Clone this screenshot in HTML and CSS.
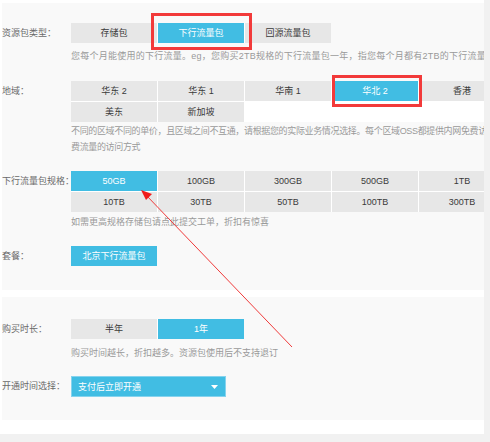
FILE: index.html
```html
<!DOCTYPE html>
<html lang="zh-CN">
<head>
<meta charset="utf-8">
<link rel="stylesheet" href="styles.css">
</head>
<body>
<div class="page">
  <section class="panel panel-top">
    <div class="row row-type">
      <div class="label">资源包类型：</div>
      <div class="content">
        <div class="opts opts-3">
          <div class="opt">存储包</div>
          <div class="opt on">下行流量包</div>
          <div class="opt">回源流量包</div>
        </div>
        <p class="desc desc-type">您每个月能使用的下行流量。eg，您购买2TB规格的下行流量包一年，指您每个月都有2TB的下行流量包可以使用</p>
      </div>
    </div>
    <div class="row row-region">
      <div class="label">地域：</div>
      <div class="content">
        <div class="opts opts-5">
          <div class="opt">华东 2</div>
          <div class="opt">华东 1</div>
          <div class="opt">华南 1</div>
          <div class="opt on">华北 2</div>
          <div class="opt">香港</div>
          <div class="opt">美东</div>
          <div class="opt">新加坡</div>
        </div>
        <p class="desc desc-region">不同的区域不同的单价，且区域之间不互通，请根据您的实际业务情况选择。每个区域OSS都提供内网免费访问，免<br>费流量的访问方式</p>
      </div>
    </div>
    <div class="row row-spec">
      <div class="label">下行流量包规格：</div>
      <div class="content">
        <div class="opts opts-5">
          <div class="opt on">50GB</div>
          <div class="opt">100GB</div>
          <div class="opt">300GB</div>
          <div class="opt">500GB</div>
          <div class="opt">1TB</div>
          <div class="opt">10TB</div>
          <div class="opt">30TB</div>
          <div class="opt">50TB</div>
          <div class="opt">100TB</div>
          <div class="opt">300TB</div>
        </div>
        <p class="desc desc-spec">如需更高规格存储包请点此提交工单，折扣有惊喜</p>
      </div>
    </div>
    <div class="row row-pkg">
      <div class="label">套餐：</div>
      <div class="content">
        <div class="opts opts-1">
          <div class="opt on">北京下行流量包</div>
        </div>
      </div>
    </div>
  </section>
  <section class="panel panel-bottom">
    <div class="row row-dur">
      <div class="label">购买时长：</div>
      <div class="content">
        <div class="opts opts-2">
          <div class="opt">半年</div>
          <div class="opt on">1年</div>
        </div>
        <p class="desc desc-dur">购买时间越长，折扣越多。资源包使用后不支持退订</p>
      </div>
    </div>
    <div class="row row-open">
      <div class="label">开通时间选择：</div>
      <div class="content">
        <div class="select">
          <span>支付后立即开通</span>
          <svg class="caret" width="7" height="4" viewBox="0 0 7 4"><polygon points="0,0 7,0 3.5,4" fill="#fff"/></svg>
        </div>
      </div>
    </div>
  </section>
  <div class="mark mark-type"></div>
  <div class="mark mark-region"></div>
  <svg class="arrow" width="490" height="442" viewBox="0 0 490 442">
    <line x1="292" y1="347" x2="146" y2="195" stroke="#f03a3a" stroke-width="1"/>
    <polygon points="141,190 152,194 146,200" fill="#f01c1c"/>
  </svg>
</div>
</body>
</html>
```

FILE: styles.css
```css
* { box-sizing: border-box; }
html, body { margin: 0; padding: 0; }
body {
  background: #f1f1f1;
  font-family: "Liberation Sans", "Noto Sans CJK SC", sans-serif;
  font-size: 9px;
  width: 490px;
  height: 442px;
  overflow: hidden;
}
.page {
  position: relative;
  width: 484px;
  height: 434px;
  background: #fff;
  padding-top: 3px;
  padding-left: 2px;
  overflow: hidden;
}
.panel {
  background: #f9f9f9;
  width: 482px;
  overflow: hidden;
}
.panel-top {
  height: 287px;
  padding-top: 20px;
}
.panel-bottom {
  margin-top: 7px;
  height: 123px;
  padding-top: 22px;
}
.row {
  display: flex;
}
.label {
  width: 69px;
  flex: none;
  line-height: 20px;
  color: #6a6a6a;
  white-space: nowrap;
}
.content {
  flex: none;
  width: 440px;
}
.opts {
  display: grid;
  grid-template-columns: repeat(5, 86px);
  grid-auto-rows: 20px;
  gap: 1px;
  background: #fff;
  width: max-content;
}
.opts-1 { grid-template-columns: 86px; }
.opts-2 { grid-template-columns: repeat(2, 86px); }
.opts-3 { grid-template-columns: repeat(3, 86px); }
.opt {
  background: #e7e7e7;
  color: #3a3a3a;
  text-align: center;
  line-height: 20px;
  white-space: nowrap;
}
.opt.on {
  background: #41bde3;
  color: #fff;
}
.desc {
  margin: 0;
  color: #9a9a9a;
  white-space: nowrap;
  line-height: 14px;
}
.desc-type { margin-top: 6px; letter-spacing: 0.25px; }
.desc-region { margin-top: 1px; line-height: 16px; letter-spacing: -0.35px; }
.desc-spec { margin-top: 3px; }
.desc-dur { margin-top: 7px; }
.row-type { margin-bottom: 18px; }
.row-region { margin-bottom: 16px; }
.row-spec { margin-bottom: 17px; }
.row-dur { margin-bottom: 16px; }
.row-open .label { line-height: 21px; }
.select {
  width: 155px;
  height: 21px;
  background: #41bde3;
  border: 1px solid #86d3ee;
  color: #fff;
  display: flex;
  align-items: center;
  justify-content: space-between;
  padding: 0 7px 0 6px;
}
.caret { display: block; }
.mark {
  position: absolute;
  border: 3px solid #f23a3a;
}
.mark-type {
  left: 151px;
  top: 13px;
  width: 101px;
  height: 37px;
}
.mark-region {
  left: 332px;
  top: 75px;
  width: 90px;
  height: 32px;
}
.arrow {
  position: absolute;
  left: 0;
  top: 0;
  pointer-events: none;
}
```
